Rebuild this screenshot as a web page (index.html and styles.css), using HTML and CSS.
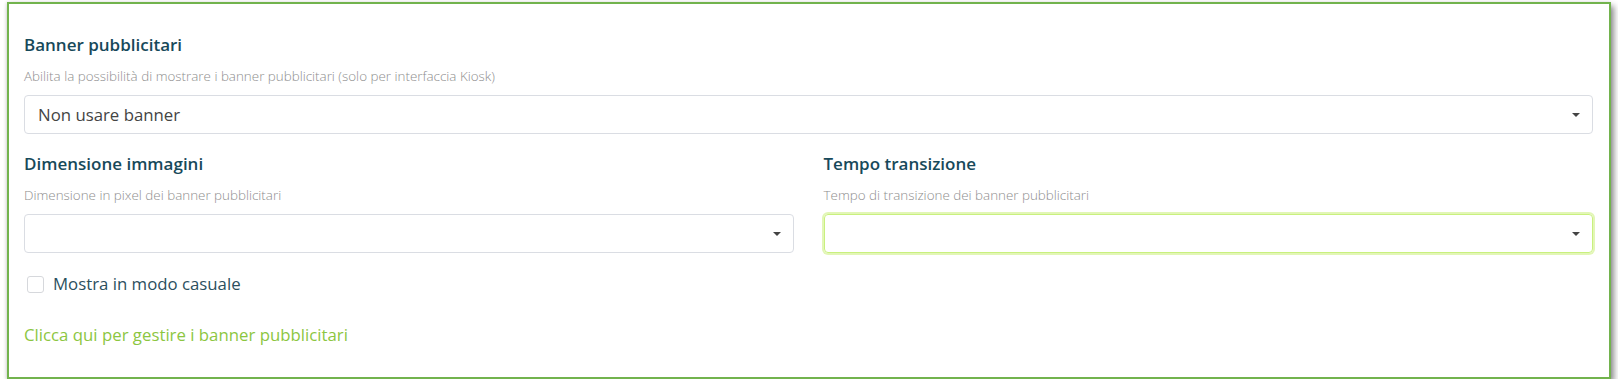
FILE: index.html
```html
<!DOCTYPE html>
<html lang="it">
<head>
    <meta charset="UTF-8">
    <meta name="viewport" content="width=device-width, initial-scale=1.0">
    <title>Banner pubblicitari</title>
    <link rel="stylesheet" href="styles.css">
</head>
<body>
    <div class="panel">
        <div class="field">
            <div class="field-title">Banner pubblicitari</div>
            <div class="field-help">Abilita la possibilità di mostrare i banner pubblicitari (solo per interfaccia Kiosk)</div>
            <div class="select">
                <span>Non usare banner</span>
                <span class="caret"></span>
            </div>
        </div>

        <div class="row">
            <div class="field">
                <div class="field-title">Dimensione immagini</div>
                <div class="field-help">Dimensione in pixel dei banner pubblicitari</div>
                <div class="select">
                    <span></span>
                    <span class="caret"></span>
                </div>
            </div>
            <div class="field">
                <div class="field-title">Tempo transizione</div>
                <div class="field-help">Tempo di transizione dei banner pubblicitari</div>
                <div class="select focused">
                    <span></span>
                    <span class="caret"></span>
                </div>
            </div>
        </div>

        <label class="check">
            <span class="box"></span>
            Mostra in modo casuale
        </label>

        <a href="#" class="manage-link">Clicca qui per gestire i banner pubblicitari</a>
    </div>
</body>
</html>
```

FILE: styles.css
```css
body {
    margin: 0;
    font-family: "Open Sans", Arial, sans-serif;
    background: #fff;
}

.panel {
    box-sizing: border-box;
    width: 1604px;
    height: 377px;
    margin: 2px 0 0 7px;
    padding: 29px 16px 0 15px;
    border: 2px solid #72b34d;
    background: #fff;
    box-shadow: 3px 4px 6px rgba(0, 0, 0, 0.45), -1px 0 3px rgba(0, 0, 0, 0.1);
}

.field-title {
    font-size: 17px;
    line-height: 24px;
    font-weight: 600;
    color: #17495a;
}

.field-help {
    margin: 10px 0 10px;
    font-size: 13.4px;
    line-height: 18px;
    font-weight: 300;
    color: #8e8e8e;
}

.select {
    box-sizing: border-box;
    height: 39px;
    display: flex;
    align-items: center;
    justify-content: space-between;
    padding: 0 12px 0 13px;
    border: 1px solid #dadde3;
    border-radius: 4px;
    font-size: 16.8px;
    color: #444;
}

.select.focused {
    border-color: #c9f07e;
    box-shadow: 0 0 0 2px #e2f6b6;
}

.caret {
    width: 0;
    height: 0;
    border-left: 4px solid transparent;
    border-right: 4px solid transparent;
    border-top: 4px solid #444;
}

.row {
    display: grid;
    grid-template-columns: 1fr 1fr;
    column-gap: 30px;
    margin-top: 18px;
}

.check {
    display: flex;
    align-items: center;
    gap: 9px;
    margin-top: 19px;
    padding-left: 3px;
    font-size: 16.8px;
    line-height: 24px;
    color: #2b4f5e;
}

.box {
    box-sizing: border-box;
    width: 17px;
    height: 17px;
    border: 1px solid #d6d8dc;
    border-radius: 3px;
    background: #fff;
}

.manage-link {
    display: block;
    margin-top: 27px;
    font-size: 16.8px;
    line-height: 24px;
    color: #8cc63f;
    text-decoration: none;
}
```
